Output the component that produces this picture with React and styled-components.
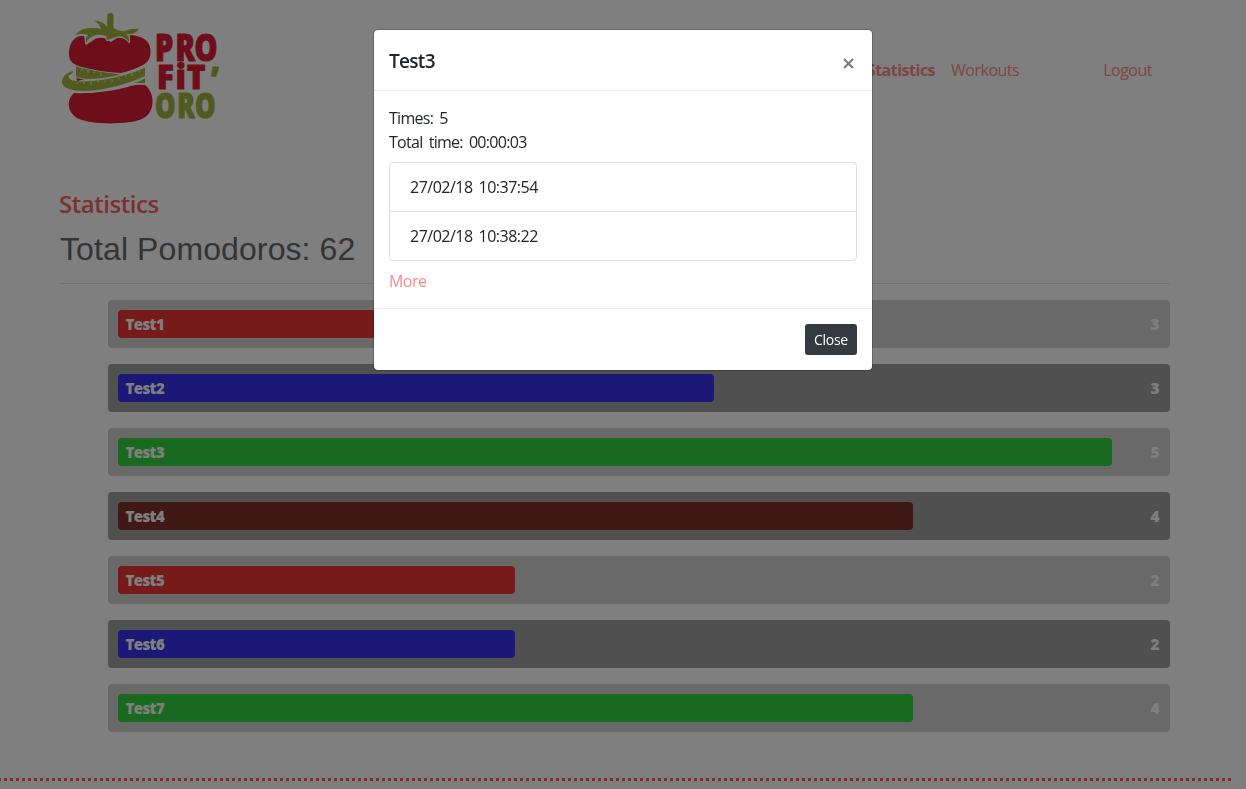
import React from 'react';
import styled, { createGlobalStyle } from 'styled-components';

const Global = createGlobalStyle`
  *, *::before, *::after { box-sizing: border-box; }
  html, body { margin: 0; height: 789px; overflow: hidden; }
  body {
    background: #fff;
    color: #212529;
    font: 400 16px/24px "Open Sans", "Noto Sans", sans-serif;
    letter-spacing: -0.55px;
    word-spacing: 1.8px;
  }
`;

const Page = styled.div`
  width: 1230px;
  height: 789px;
  display: flex;
  flex-direction: column;
`;

const Container = styled.div`
  width: 1110px;
  margin: 0 auto;
`;

const Header = styled.header`
  display: flex;
  justify-content: space-between;
  height: 189px;
`;

const Logo = styled.svg`
  width: 164px;
  height: 120px;
  margin-top: 8px;
  overflow: visible;
`;

const Nav = styled.nav`
  display: flex;
  height: 24px;
  margin: 58px 18px 0 0;
`;

const NavLink = styled.a`
  color: #fa8a8a;
  font-weight: ${({ $active }) => ($active ? 700 : 400)};
  letter-spacing: ${({ $active }) => ($active ? '-0.5px' : '-0.5px')};
  margin-left: ${({ $gap }) => $gap || 16}px;
`;

const Title = styled.h1`
  margin: 0 0 8px -1px;
  font-size: 24px;
  line-height: 29px;
  font-weight: 600;
  letter-spacing: -0.45px;
  color: #fa6060;
`;

const Total = styled.h2`
  margin: 0;
  font: 400 32px/46px "Liberation Sans", Arial, sans-serif;
  letter-spacing: 0.1px;
  word-spacing: 0;
  color: #64686c;
  height: 58px;
  border-bottom: 1px solid #e5e5e5;
`;

const Chart = styled.ul`
  list-style: none;
  margin: 16px 0 0;
  padding: 0 0 0 48px;
  display: flex;
  flex-direction: column;
  gap: 16px;
`;

const Row = styled.li`
  height: 48px;
  padding: 10px;
  display: flex;
  justify-content: space-between;
  align-items: center;
  border-radius: 4px;
  background: ${({ $dark }) => ($dark ? '#a0a0a0' : '#d2d2d2')};
`;

const Bar = styled.div`
  height: 28px;
  padding-left: 7.5px;
  border-radius: 4px;
  line-height: 28px;
  font-size: 15px;
  font-weight: 800;
  letter-spacing: -0.6px;
  color: #fff;
  background: ${({ $color }) => $color};
`;

const Count = styled.span`
  font-size: 15.5px;
  font-weight: 800;
  letter-spacing: 0.5px;
  color: #fff;
`;

const Dots = styled.div`
  height: 3px;
  width: 1231px;
  margin-top: 46px;
  background: repeating-linear-gradient(90deg, #fa6060 0 1px, transparent 1px 4px, #fa6060 4px 6px);
`;

const Backdrop = styled.div`
  position: fixed;
  inset: 0;
  background: rgba(0, 0, 0, 0.5);
`;

const Modal = styled.section`
  width: 500px;
  margin: 29px auto 0;
  background: #fff;
  background-clip: padding-box;
  border: 1px solid rgba(0, 0, 0, 0.2);
  border-radius: 5px;
`;

const ModalHeader = styled.header`
  display: flex;
  justify-content: space-between;
  height: 61px;
  padding: 15px;
  border-bottom: 1px solid #e9ecef;
`;

const ModalTitle = styled.h3`
  margin: 0;
  font-size: 19px;
  line-height: 32px;
  font-weight: 600;
  letter-spacing: -0.7px;
`;

const CloseIcon = styled.svg`
  width: 11px;
  height: 11px;
  margin: 13px 3px 0 0;
`;

const ModalBody = styled.div`
  height: 218px;
  padding: 15px 15px;
  border-bottom: 1px solid #e9ecef;
`;

const Line = styled.p`
  margin: 0;
  letter-spacing: -0.7px;
  word-spacing: 2.6px;
`;

const Laps = styled.ul`
  list-style: none;
  margin: 8px 0;
  padding: 0;
  border: 1px solid #dfdfdf;
  border-radius: 4px;
`;

const Lap = styled.li`
  height: 49px;
  padding: 12px 20px;
  letter-spacing: -0.5px;
  word-spacing: 2.2px;
  & + & { border-top: 1px solid #dfdfdf; }
  &:first-child { height: 48px; }
`;

const More = styled.a`
  color: #fa8a8a;
`;

const ModalFooter = styled.footer`
  display: flex;
  justify-content: flex-end;
  padding: 15px;
`;

const Button = styled.button`
  width: 52px;
  height: 31px;
  padding: 1px 0 0;
  border: 0;
  border-radius: 3px;
  background: #343a40;
  color: #fff;
  font: 400 14px/30px "Open Sans", sans-serif;
  letter-spacing: -0.3px;
`;

const RED = '#ec3434';
const BLUE = '#3830ee';
const GREEN = '#34d240';
const BROWN = '#80302a';

const workouts = [
  ['Test1', 3, RED],
  ['Test2', 3, BLUE],
  ['Test3', 5, GREEN],
  ['Test4', 4, BROWN],
  ['Test5', 2, RED],
  ['Test6', 2, BLUE],
  ['Test7', 4, GREEN],
];

const LogoText = styled.text`
  font-family: "Open Sans", sans-serif;
  font-weight: 800;
  letter-spacing: 0;
  word-spacing: 0;
  stroke-width: 1.2px;
  stroke-linejoin: round;
  fill: ${({ $c }) => $c};
  stroke: ${({ $c }) => $c};
`;

function Brand() {
  const red = '#dc1c34';
  const green = '#a0b43c';
  return (
    <Logo viewBox="60 8 164 120">
      <path fill={red} d="M80 36 C72 38 69 46 69 54 C69 62 74 65 82 67 C94 70 108 72.500 121 73 Q133 70 141 66 C148 63 151 58 150.500 50 C150 41 143 36 130 35 L130 43 Q124 37 117 38 L111 42 L104 38 Q99 37 95 39 L86 45 L84 36 Z" />
      <path fill={red} d="M74 93 C66 100 67 112 77 118 C89 125 128 125 142 119 C155 113 156 94 145 85 Q138 84 131 86 C115 91 90 94 74 93 Z" />
      <path fill={green} stroke="#fff" strokeWidth="2" strokeLinejoin="round" paintOrder="stroke" d="M107.500 14 Q110 12 113.500 14 L113.500 28 Q119 32 125 31 Q131 28 139 29 Q135 35 126 34 Q130 37 129 42 Q123 34 116 37 L107 40 L106 36 Q101 34 96 35 Q89 37 86 43 Q85 38 88 35 Q82 33 75 35 Q82 27 92 28 Q98 28 101 29 Q100 24 94 20.500 Q103 21 107 27 Z" />
      <path fill={green} d="M76 66.500 Q96 72 121 74.500 Q102 79 86 79 L76 77 Z" />
      <path fill={red} d="M76.500 78 L84 79.500 L77 81 Z" />
      <path fill={green} d="M145 67.500 C127 76 101 82 80 81.500 C69 81 65 76 73 73.500 V71 C65 73 61 79 62 83 C64 91 83 93 104 89 C122 85 132 82 145 76 Z" />
      <path fill={green} d="M145 78 Q141 81 134 83 L145 83 Z" />
      <path fill="none" stroke="#fff" strokeWidth="0.800" d="M73 71.500V73.500 Q65 76 73 80.500 M82 68.500v2 M88 70v3 M94 71.500v2 M101 73v3 M77 82v2 M84 82v2 M91 82v3 M98 81v2 M105 80.500v2 M112 79v3 M119 77.500v2 M126 75.500v2 M132 73v3 M139 70.500v2" />
      <path fill="none" stroke="#fff" strokeWidth="0.800" d="M74 92 C98 94 122 87 145 78" />
      <LogoText $c={red} transform="translate(155 60.500) scale(.79 1)" fontSize="36.500" x="0 26 50">PRO</LogoText>
      <LogoText $c={red} transform="translate(157 88.500) scale(.94 1)" fontSize="33" x="0 20 32">FiT</LogoText>
      <LogoText $c={green} x="211" y="90" fontSize="31">’</LogoText>
      <LogoText $c={green} transform="translate(155 118) scale(.74 1)" fontSize="35" x="0 30 54">ORO</LogoText>
    </Logo>
  );
}

export default function App() {
  return (
    <>
      <Global />
      <Page>
        <Container>
          <Header>
            <Brand />
            <Nav>
              <NavLink $active>Statistics</NavLink>
              <NavLink>Workouts</NavLink>
              <NavLink $gap={84}>Logout</NavLink>
            </Nav>
          </Header>
          <Title>Statistics</Title>
          <Total>Total Pomodoros: 62</Total>
          <Chart>
            {workouts.map(([name, count, color], i) => (
              <Row key={name} $dark={i % 2 === 1}>
                <Bar $color={color} style={{ width: Math.floor(count * 198.8) }}>{name}</Bar>
                <Count>{count}</Count>
              </Row>
            ))}
          </Chart>
        </Container>
        <Dots />
      </Page>
      <Backdrop>
        <Modal>
          <ModalHeader>
            <ModalTitle>Test3</ModalTitle>
            <CloseIcon viewBox="0 0 11 11">
              <path d="M1 1L10 10M10 1L1 10" stroke="#7f7f7f" strokeWidth="2.200" />
            </CloseIcon>
          </ModalHeader>
          <ModalBody>
            <Line>Times: 5</Line>
            <Line>Total time: 00:00:03</Line>
            <Laps>
              <Lap>27/02/18 10:37:54</Lap>
              <Lap>27/02/18 10:38:22</Lap>
            </Laps>
            <More>More</More>
          </ModalBody>
          <ModalFooter>
            <Button>Close</Button>
          </ModalFooter>
        </Modal>
      </Backdrop>
    </>
  );
}
